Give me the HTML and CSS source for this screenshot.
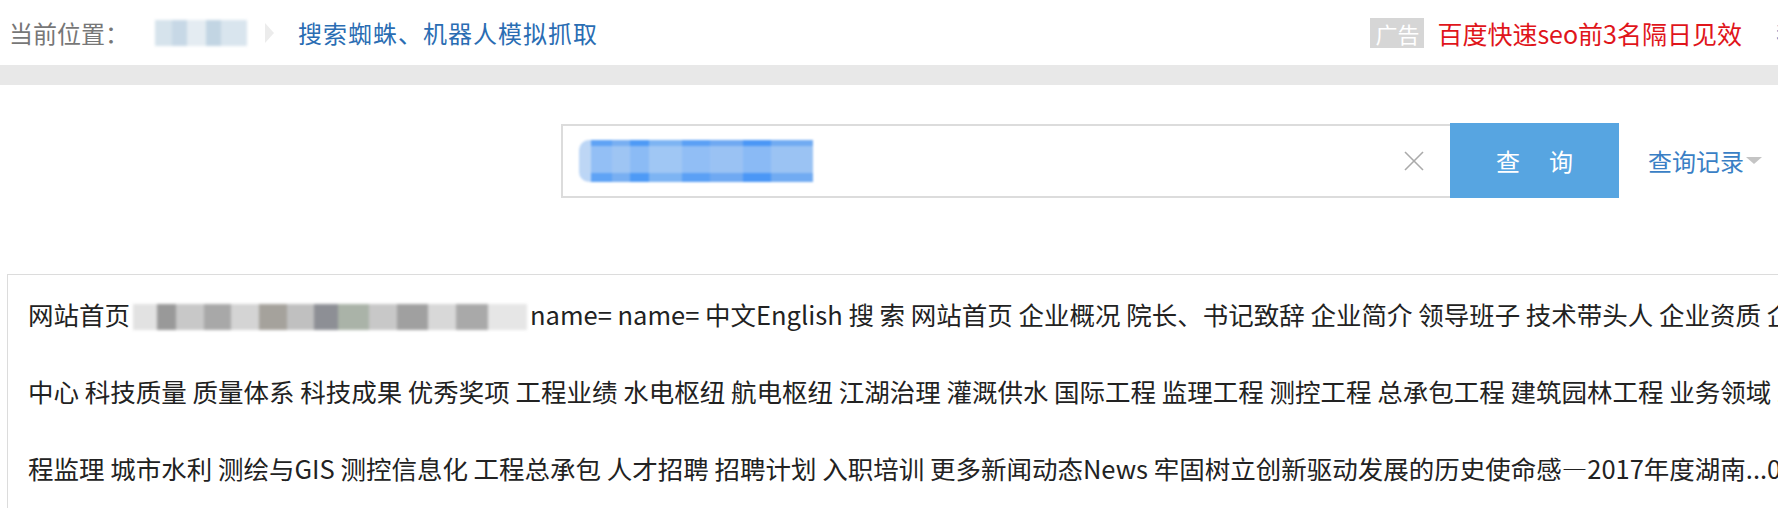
FILE: index.html
```html
<!DOCTYPE html>
<html lang="zh-CN">
<head>
    <meta charset="UTF-8">
    <title>搜索蜘蛛、机器人模拟抓取</title>
    <link rel="stylesheet" href="styles.css">
</head>
<body>
    <div class="topbar">
        <div class="crumbs">
            <span class="crumb-label">当前位置：</span>
            <span class="blur-block crumb-blur"></span>
            <span class="crumb-arrow"></span>
            <a class="crumb-link" href="#">搜索蜘蛛、机器人模拟抓取</a>
        </div>
        <div class="ad">
            <span class="ad-tag">广告</span>
            <a class="ad-link" href="#">百度快速seo前3名隔日见效</a>
            <a class="more-link" href="#">我</a>
        </div>
    </div>

    <div class="divider"></div>

    <div class="search-row">
        <div class="search-box">
            <span class="selected-text"></span>
            <svg class="clear-icon" width="22" height="22" viewBox="0 0 22 22">
                <line x1="2" y1="2" x2="20" y2="20" stroke="#aaa" stroke-width="1.6"/>
                <line x1="20" y1="2" x2="2" y2="20" stroke="#aaa" stroke-width="1.6"/>
            </svg>
        </div>
        <button class="search-btn"><span>查</span><span>询</span></button>
        <a class="history" href="#">查询记录<span class="caret"></span></a>
    </div>

    <div class="result">
        <div class="line">网站首页<span class="blur-block text-blur"></span>name= name= 中文English 搜 索 网站首页 企业概况 院长、书记致辞 企业简介 领导班子 技术带头人 企业资质 企业文化 党建</div>
        <div class="line">中心 科技质量 质量体系 科技成果 优秀奖项 工程业绩 水电枢纽 航电枢纽 江湖治理 灌溉供水 国际工程 监理工程 测控工程 总承包工程 建筑园林工程 业务领域 工程设计</div>
        <div class="line">程监理 城市水利 测绘与GIS 测控信息化 工程总承包 人才招聘 招聘计划 入职培训 更多新闻动态News 牢固树立创新驱动发展的历史使命感—2017年度湖南...05-12 更多</div>
    </div>
</body>
</html>
```

FILE: styles.css
```css
* {
    margin: 0;
    padding: 0;
    box-sizing: border-box;
    font-family: "Noto Sans CJK SC", "Noto Sans", sans-serif;
}

body {
    background: #fff;
    color: #333;
    overflow: hidden;
    width: 1778px;
}

a {
    text-decoration: none;
}

.topbar {
    height: 65px;
    display: flex;
    align-items: center;
    padding-left: 9px;
    font-size: 24px;
    white-space: nowrap;
}

.crumbs {
    display: flex;
    align-items: center;
    height: 36px;
    line-height: 36px;
}

.crumb-label {
    color: #777;
}

.blur-block {
    display: inline-block;
    filter: blur(1.5px);
}

.crumb-blur {
    width: 92px;
    height: 26px;
    margin-left: 26px;
    background: linear-gradient(90deg, #d6e3ec 0 18%, #c7d8e6 18% 35%, #e4ecf2 35% 55%, #c2d5e3 55% 72%, #d9e5ee 72% 100%);
}

.crumb-arrow {
    width: 0;
    height: 0;
    margin-left: 18px;
    border-top: 10px solid transparent;
    border-bottom: 10px solid transparent;
    border-left: 9px solid #ececec;
}

.crumb-link {
    color: #2a6db3;
    margin-left: 24px;
    letter-spacing: 1px;
}

.ad {
    margin-left: auto;
    display: flex;
    align-items: center;
    height: 36px;
}

.ad-tag {
    background: #d6d6d6;
    color: #fff;
    font-size: 22px;
    line-height: 30px;
    padding: 0 5px;
}

.ad-link {
    color: #e0151b;
    font-size: 25px;
    margin-left: 13px;
    line-height: 36px;
}

.more-link {
    color: #3a7fc5;
    margin-left: 34px;
    margin-right: -22px;
}

.divider {
    height: 20px;
    background: #e8e8e8;
}

.search-row {
    display: flex;
    align-items: center;
    margin-top: 38px;
    padding-left: 561px;
}

.search-box {
    width: 889px;
    height: 74px;
    border: 2px solid #dcdcdc;
    border-right: none;
    display: flex;
    align-items: center;
    padding-left: 16px;
    padding-right: 25px;
}

.selected-text {
    width: 234px;
    height: 42px;
    border-radius: 10px 0 0 10px;
    background:
        linear-gradient(180deg, transparent 0 14%, rgba(190, 215, 245, 0.55) 14% 78%, transparent 78%),
        linear-gradient(90deg, #bcd6f6 0 5%, #5fa3f5 5% 14%, #78aff2 14% 22%, #4e9af6 22% 30%, #7db4f3 30% 44%, #5ba0f5 44% 56%, #6fa9f2 56% 70%, #4b97f6 70% 82%, #71abf2 82% 100%);
    filter: blur(1px);
}

.clear-icon {
    margin-left: auto;
}

.search-btn {
    width: 169px;
    height: 75px;
    background: #57a5e1;
    border: none;
    color: #fff;
    font-size: 24px;
    display: flex;
    justify-content: center;
    align-items: center;
    gap: 29px;
}

.history {
    margin-left: 29px;
    color: #3a7fc5;
    font-size: 24px;
    display: flex;
    align-items: center;
}

.caret {
    width: 0;
    height: 0;
    margin-left: 2px;
    border-left: 8px solid transparent;
    border-right: 8px solid transparent;
    border-top: 7px solid #c4c4c4;
}

.result {
    margin-top: 76px;
    margin-left: 7px;
    width: 1900px;
    height: 300px;
    border: 1px solid #dcdcdc;
    padding-left: 20px;
    font-size: 25.5px;
    color: #222;
}

.line {
    line-height: 77px;
    white-space: nowrap;
}

.text-blur {
    width: 394px;
    height: 26px;
    vertical-align: -5px;
    margin: 0 3px;
    background: linear-gradient(90deg, #e2e2e2 0 6%, #999 6% 11%, #c8c8c8 11% 18%, #a8a8a8 18% 25%, #d4d4d4 25% 32%, #a5a29c 32% 39%, #c0c0c0 39% 46%, #8d8f95 46% 52%, #aab3a8 52% 60%, #c8c8c8 60% 67%, #a0a0a0 67% 75%, #d8d8d8 75% 82%, #a9a9a9 82% 90%, #e6e6e6 90% 100%);
}
```
